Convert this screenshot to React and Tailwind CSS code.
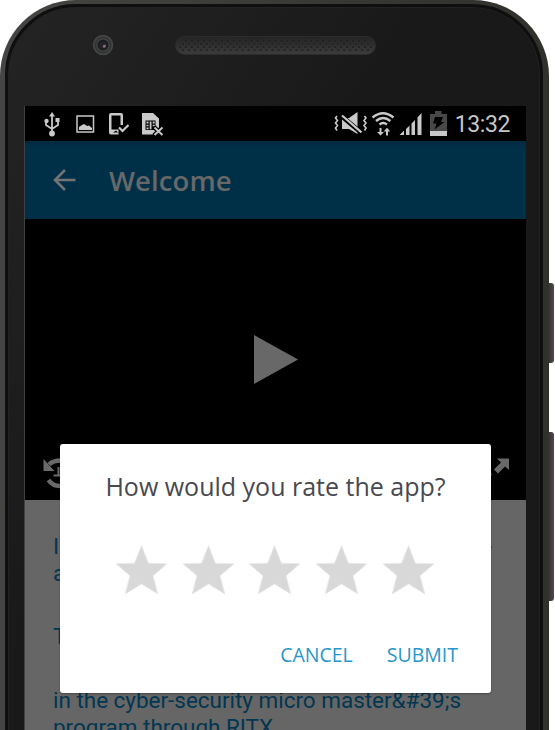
const STAR = "M25.5 0.5 L32.4 18.2 L51 18.8 L37.1 30.8 L41.8 49 L25.5 39 L9.2 49 L13.9 30.8 L0 18.8 L18.6 18.2 Z";

function Camera() {
  return (
    <svg className="h-[22px] w-[22px] shrink-0" viewBox="0 0 22 22">
      <circle cx="11" cy="11" r="10.3" fill="#444545" />
      <circle cx="11" cy="11" r="8.6" fill="#343535" />
      <circle cx="11" cy="11" r="6.6" fill="#484849" />
      <circle cx="11" cy="11" r="5.6" fill="#1d1c21" />
      <circle cx="11" cy="11" r="3.5" fill="#25232b" />
      <circle cx="12.2" cy="12.4" r="1.3" fill="#8c7479" />
      <circle cx="13.2" cy="11.4" r="0.7" fill="#817c88" />
    </svg>
  );
}

function Speaker() {
  return (
    <svg className="h-[19px] w-[201px] shrink-0" viewBox="0 0 202 19" preserveAspectRatio="none">
      <defs>
        <linearGradient id="grille" x1="0" y1="0" x2="0" y2="1">
          <stop offset="0" stopColor="#242424" />
          <stop offset="1" stopColor="#3c3c3c" />
        </linearGradient>
        <pattern id="holes" width="6" height="6" patternUnits="userSpaceOnUse">
          <circle cx="2" cy="2" r="1.1" fill="#202020" />
          <circle cx="5" cy="5" r="1.1" fill="#202020" />
        </pattern>
      </defs>
      <rect x="0.5" y="0.5" width="201" height="18" rx="9" fill="url(#grille)" stroke="#2c2c2c" />
      <rect x="4" y="3" width="194" height="13" rx="6.5" fill="url(#holes)" />
    </svg>
  );
}

function LeftStatusIcons() {
  return (
    <svg className="h-[35px] w-[150px]" viewBox="25 106 150 35" fill="#c9c9c9">
      <g fill="none" stroke="#c9c9c9" strokeWidth="1.8">
        <path d="M52 115v18M46 122v3l6 4 6-4v-3" />
      </g>
      <path d="M52 112l3 4.5h-6zM55.5 118h4v4h-4z" />
      <circle cx="46.5" cy="121" r="2.2" />
      <circle cx="52" cy="133.5" r="2.9" />
      <rect x="77" y="116" width="16.5" height="16" fill="none" stroke="#c9c9c9" strokeWidth="1.5" />
      <path d="M79 130v-3l3-2 2-1 3 2 2-.5 3 2.500v2z" />
      <path fillRule="evenodd" d="M109 115q0-2 2-2h10q2 0 2 2v10h-2.500v-9.500h-9v14h7v5h-7.500q-2 0-2-2z" />
      <path d="M113 132.500l3-2 2 2z" fill="#000" />
      <path d="M119 127.500l3.500 3.500 6-6" fill="none" stroke="#c9c9c9" strokeWidth="2.2" />
      <path d="M142 113h11l6 5.500v16h-17z" />
      <path d="M145.500 120.500h10v9.500h-10z" fill="#000" />
      <path d="M146.500 121.500h2v2h-2zM146.500 124.700h2v1.600h-2zM146.500 127.500h2v1.700h-2zM149.700 121.500h1.800v7.700h-1.800zM152.700 121.500h2v2h-2zM152.700 124.700h2v1.600h-2z" />
      <path d="M154 127l8.500 8.500M162.500 127l-8.500 8.500" stroke="#000" strokeWidth="4.500" />
      <path d="M154.500 127.500l8 7.500M162.500 127.500l-8 7.500" stroke="#c9c9c9" strokeWidth="1.900" />
    </svg>
  );
}

function RightStatusIcons() {
  return (
    <svg className="h-[35px] w-[118px]" viewBox="332 106 118 35" fill="#c9c9c9">
      <g fill="none" stroke="#c9c9c9" strokeWidth="1.600">
        <path d="M336 116l-1.500 2 2 2.500-2 2.500 2 2.500-2 2.500 1.500 2.500M363.500 116l1.500 2-2 2.500 2 2.500-2 2.500 2 2.500-1.500 2.500" />
      </g>
      <path d="M341 118h7l8.500-6v22l-8.500-5h-7z" />
      <path d="M341 116.500l19 16" stroke="#000" strokeWidth="4.500" />
      <path d="M341 115.500l19.500 16.800" stroke="#c9c9c9" strokeWidth="2.200" />
      <g fill="none" stroke="#c9c9c9" strokeWidth="2.300">
        <path d="M371.500 117.500q10.500-8.500 21 0M375 121q7.200-6 14.400 0M378.500 124.500q3.700-3 7.400 0" />
      </g>
      <path d="M378.500 128h2v4h2.500l-3.500 3.500-3.500-3.500h2.500zM385 135.500h2v-4h2.300l-3.300-3.700-3.300 3.700h2.300z" />
      <path d="M398.500 135l4.500-4.500v4.500zM405 129l3.500-3.500v9.500h-3.500zM410.500 123.500l3.500-3.500v15h-3.500zM416.500 117.500l4-4.500v22h-4z" />
      <path d="M434 111h6.500v3h5.500v22h-17v-22h5z" fill="#484848" />
      <path d="M429 131h17v5h-17z" />
      <path d="M434 117h8l-2 5h3.500l-10 7.500 2-6h-3.500z" fill="#000" />
    </svg>
  );
}

function ActionBar() {
  return (
    <div className="flex h-[78px] items-center bg-linear-to-b from-[#002b41] via-[#003048] via-10% to-[#003048] pl-[28px]">
      <svg className="h-6 w-6 shrink-0" viewBox="0 0 24 24" fill="none" stroke="#737373" strokeWidth="2.6">
        <path d="M22.500 12H2.500M12 2L2 12l10 10" />
      </svg>
      <h1 className="ml-[32px] pt-[1px] font-['Open_Sans',sans-serif] text-[27.500px] leading-none font-semibold tracking-[0.100px] text-[#686868]">Welcome</h1>
    </div>
  );
}

function VideoPlayer() {
  return (
    <div className="flex h-[281px] flex-col bg-black">
      <svg className="mt-[116px] ml-[229px] h-[49px] w-[44px] shrink-0" viewBox="0 0 44 49">
        <path d="M0 0v49l44-24.500z" fill="#686868" />
      </svg>
      <div className="mt-[72px] flex justify-between pr-[17px] pl-[18px]">
        <svg className="h-[34px] w-[34px]" viewBox="43 456 34 34">
          <path d="M49 464.500Q53 460.500 61 460.500M48.500 480Q53 486.500 61 486" fill="none" stroke="#6a6a6a" strokeWidth="4.500" />
          <path d="M43.500 459l11 12h-11z" fill="#6a6a6a" />
          <path d="M53.500 475.500h7M58.500 467v8" fill="none" stroke="#6a6a6a" strokeWidth="2" />
        </svg>
        <svg className="h-[34px] w-[34px]" viewBox="475 456 34 34">
          <path d="M497 458.500h12v11.500l-4-3.500-7 7-4-4 7-7z" fill="#696969" />
          <path d="M492 474.500l-7 7 4 4h-12v-12l4 4 7-7z" fill="#696969" />
        </svg>
      </div>
    </div>
  );
}

function CourseText() {
  return (
    <div className="h-[230px] overflow-hidden bg-[#666] pt-[33px] pr-[34px] pl-[28px] font-['Roboto',sans-serif] text-[22.500px] leading-[26.500px] tracking-[-0.020px] whitespace-nowrap text-[#023651]">
      <p className="flex justify-between"><span>I</span><span>-</span></p>
      <p>a</p>
      <p className="mt-[37px]">T</p>
      <p className="mt-[37.500px]">in the cyber-security micro master&amp;#39;s</p>
      <p>program through RITX</p>
    </div>
  );
}

function RatingDialog() {
  return (
    <div role="dialog" className="absolute top-[444px] left-[60px] flex h-[249px] w-[431px] flex-col rounded-[3px] bg-white font-['Open_Sans',sans-serif] shadow-[0_1px_2px_rgba(0,0,0,0.3)]">
      <h2 className="mt-[24px] text-center text-[25px] leading-[36px] whitespace-nowrap text-[#48494f]">How would you rate the app?</h2>
      <div className="mt-[41px] flex gap-[15.700px] pl-[56px]">
        {[1, 2, 3, 4, 5].map((n) => (
          <svg key={n} className="h-[50px] w-[51px] shrink-0" viewBox="0 0 51 50">
            <path d={STAR} fill="#d8d8d8" stroke="#e8e8e8" strokeWidth="0.800" />
          </svg>
        ))}
      </div>
      <div className="mt-[45px] flex justify-end gap-[34px] pr-[33px] text-[19.500px] leading-[30px] text-[#2796cb]">
        <button>CANCEL</button>
        <button>SUBMIT</button>
      </div>
    </div>
  );
}

export default function App() {
  return (
    <div className="relative h-[730px] w-[555px] overflow-hidden bg-white">
      <div className="absolute top-[283px] left-[546px] h-[80px] w-[8px] rounded-r-[3px] bg-linear-to-r from-[#3b373a] from-50% to-[#514b50]" />
      <div className="absolute top-[432px] left-[546px] h-[169px] w-[8px] rounded-r-[3px] bg-linear-to-r from-[#3b373a] from-50% to-[#514b50]" />
      <div className="relative h-[850px] w-[549px] rounded-t-[76px] bg-linear-to-r from-[#454543] to-[#30312c] pt-[4px] pr-[6px] pl-[5px]">
        <div className="h-full rounded-t-[71px] border-3 border-[#0f0f0f] bg-linear-to-br from-[#242424] to-[#191919] to-40% pl-[16px] shadow-[inset_0_0_0_1px_#222]">
          <div className="flex h-[99px] pt-[27px] pl-[68px]">
            <Camera />
            <div className="ml-[61px] pt-[2px]">
              <Speaker />
            </div>
          </div>
          <div className="w-[502px] border-l border-[#3f4042]">
            <div className="flex h-[35px] justify-between bg-black pr-[16px]">
              <LeftStatusIcons />
              <div className="flex">
                <RightStatusIcons />
                <span className="ml-[4px] font-['Roboto',sans-serif] text-[23px] leading-[37px] tracking-[-0.400px] text-[#c6c6c6]">13:32</span>
              </div>
            </div>
            <ActionBar />
            <VideoPlayer />
            <CourseText />
          </div>
        </div>
      </div>
      <RatingDialog />
    </div>
  );
}
